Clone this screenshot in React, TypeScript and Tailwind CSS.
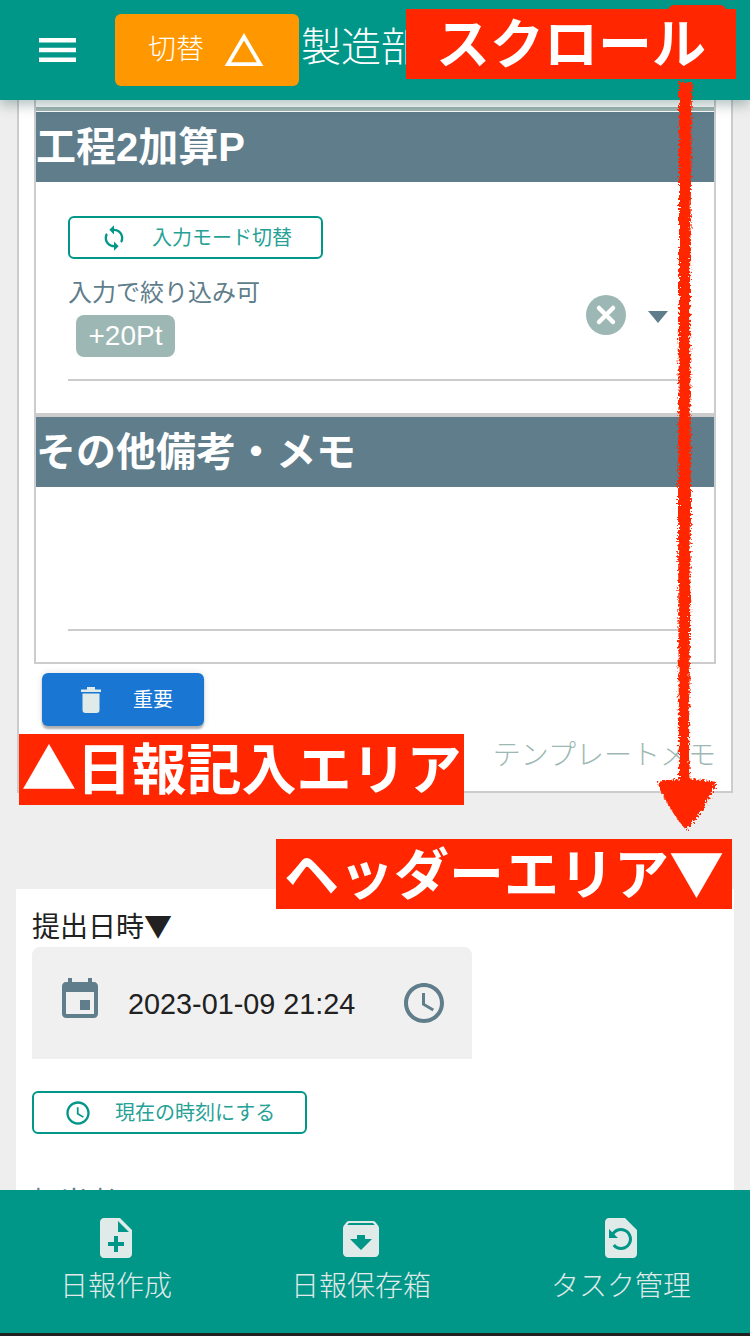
const jp = "font-['Liberation_Sans','Noto_Sans_CJK_JP',sans-serif]";
const cjkFirst = "font-['Noto_Sans_CJK_JP',sans-serif]";

function Section({ title }: { title: string }) {
  return (
    <div className="flex h-[70px] items-center bg-[#607d8b] text-[40px] font-bold leading-none text-white">
      {title}
    </div>
  );
}

function ClockIcon({ className }: { className: string }) {
  return (
    <svg viewBox="0 0 24 24" className={className} fill="currentColor">
      <path d="M11.99 2C6.47 2 2 6.48 2 12s4.47 10 9.99 10C17.52 22 22 17.52 22 12S17.52 2 11.99 2zM12 20c-4.42 0-8-3.58-8-8s3.58-8 8-8 8 3.58 8 8-3.58 8-8 8z" />
      <path d="M12.5 7H11v6l5.25 3.15.75-1.23-4.5-2.67z" />
    </svg>
  );
}

function NavItem({ icon, label, className }: { icon: React.ReactNode; label: string; className: string }) {
  return (
    <div className={`flex flex-col items-center ${className}`}>
      {icon}
      <span className="mt-[9px] text-[28px] font-light leading-[40px] text-[#e0eae8]">{label}</span>
    </div>
  );
}

function ScrollArrow() {
  return (
    <svg viewBox="0 0 90 760" className="absolute left-[645px] top-[76px] z-30 h-[760px] w-[90px]">
      <defs>
        <filter id="chalk" x="-30%" y="-5%" width="160%" height="110%">
          <feTurbulence type="fractalNoise" baseFrequency="0.45" numOctaves="2" seed="4" />
          <feDisplacementMap in="SourceGraphic" scale="7" />
        </filter>
      </defs>
      <g filter="url(#chalk)" fill="#ff2600">
        <path d="M34 6 L47 6 L45 210 L46 430 L44 680 L46 710 L34 710 L33 430 L34 210 Z" />
        <path d="M12 706 Q40 700 72 706 Q60 735 41 754 Q24 735 12 706 Z" />
      </g>
    </svg>
  );
}

export default function App() {
  return (
    <div className={`relative flex h-[1336px] w-[750px] flex-col overflow-hidden bg-[#eeeeee] ${jp}`}>
      {/* header */}
      <header className="relative z-10 flex h-[100px] shrink-0 items-start bg-[#009688] shadow-[0_5px_12px_rgba(0,60,50,0.3)]">
        <svg viewBox="0 0 37 24" className="ml-[39px] mt-[38px] h-6 w-[37px]" fill="white">
          <path d="M0 0h37v4.5H0zM0 9.8h37v4.5H0zM0 19.5h37V24H0z" />
        </svg>
        <button type="button" className="ml-[39px] mt-3.5 flex h-[72px] w-[184px] items-center rounded-md bg-[#ff9800] pl-[33px] text-[28px] font-light text-white">
          切替
          <svg viewBox="0 0 40 36" className="ml-[20px] h-[34px] w-[40px]" fill="none" stroke="white" strokeWidth="4">
            <path d="M20 4 L37 33 L3 33 Z" />
          </svg>
        </button>
        <span className="ml-0.5 mt-[23px] whitespace-nowrap text-[40px] font-light leading-[48px] text-white">製造部</span>
      </header>

      {/* scrolled content */}
      <main className="min-h-0 flex-1 overflow-hidden px-4">
        <div className="mx-px -mt-2 flex h-[701px] flex-col border-2 border-t-0 border-[#cccccc] bg-white px-[15px]">
          <div className="flex h-[572px] shrink-0 flex-col border-2 border-t-0 border-[#cccccc]">
            <div className="mb-px h-[19px] shrink-0 border-b-4 border-[#a3b7b4]" />
            <Section title="工程2加算P" />
            <div className="h-[231px] px-8 pt-[34px]">
              <button type="button" className="flex h-[43px] w-[255px] items-center rounded-md border-2 border-[#009688] pl-[30px] text-xl text-[#26a196]">
                <svg viewBox="0 0 24 24" className="h-7 w-7" fill="#009688">
                  <path d="M12 4V1L8 5l4 4V6c3.31 0 6 2.69 6 6 0 1.01-.25 1.97-.7 2.8l1.46 1.46C19.54 15.03 20 13.57 20 12c0-4.42-3.58-8-8-8zm0 14c-3.31 0-6-2.69-6-6 0-1.01.25-1.97.7-2.8L5.24 7.74C4.46 8.97 4 10.43 4 12c0 4.42 3.58 8 8 8v3l4-4-4-4v3z" />
                </svg>
                <span className="ml-[24px]">入力モード切替</span>
              </button>
              <div className="relative mt-[18px] h-[104px] border-b-2 border-[#cccccc]">
                <p className="text-2xl leading-8 text-[#607d8b]">入力で絞り込み可</p>
                <span className="ml-2 mt-1.5 flex h-[42px] w-[99px] items-center justify-center rounded-lg bg-[#9db8b4] text-[28px] font-light text-white">+20Pt</span>
                <svg viewBox="0 0 40 40" className="absolute right-[56px] top-[18px] h-10 w-10">
                  <circle cx="20" cy="20" r="20" fill="#9db8b4" />
                  <path d="M13 13 L27 27 M27 13 L13 27" stroke="white" strokeWidth="4.5" strokeLinecap="round" />
                </svg>
                <span className="absolute right-[14px] top-[34px] h-0 w-0 border-x-[10px] border-t-[12px] border-x-transparent border-t-[#607d8b]" />
              </div>
            </div>
            <div className="h-1 shrink-0 bg-[#cccccc]" />
            <Section title="その他備考・メモ" />
            <div className="h-[175px] px-8">
              <div className="h-[144px] border-b-2 border-[#cccccc]" />
            </div>
          </div>
          <button type="button" className="ml-[8px] mt-[9px] flex h-[53px] w-[162px] shrink-0 items-center rounded-md bg-[#1976d2] pl-[39px] text-xl text-white shadow-[0_3px_2px_rgba(0,0,0,0.28),0_0_7px_rgba(0,0,0,0.12)]">
            <svg viewBox="0 0 20 26" className="h-[26px] w-5" fill="#e0eae8">
              <path d="M0 2.5h20V5H0zM6 0h8v2.5H6zM1.5 6.5h17V23a3 3 0 0 1-3 3h-11a3 3 0 0 1-3-3z" />
            </svg>
            <span className="ml-8">重要</span>
          </button>
          <p className="mt-[10px] text-right text-[28px] font-light leading-[40px] text-[#9db8b4]">テンプレートメモ</p>
        </div>

        <div className="mt-24 h-[400px] bg-white px-4 pt-[17px]">
          <p className={`mb-[3px] text-[28px] leading-[38px] text-[#212121] ${cjkFirst}`}>提出日時▼</p>
          <div className="flex h-[112px] w-[440px] items-start rounded-t-lg bg-[#f0f0f0]">
            <svg viewBox="0 0 24 24" className="ml-[24px] mt-[29px] h-12 w-12" fill="#607d8b">
              <path d="M19 3h-1V1h-2v2H8V1H6v2H5c-1.11 0-2 .9-2 2v14c0 1.1.89 2 2 2h14c1.1 0 2-.9 2-2V5c0-1.1-.9-2-2-2zm0 16H5V8h14v11zM17 12h-5v5h5z" />
            </svg>
            <span className="ml-[24px] mt-[37px] text-[28.8px] leading-[40px] text-[#212121]">2023-01-09 21:24</span>
            <ClockIcon className="ml-[45px] mt-[32px] h-12 w-12 text-[#607d8b]" />
          </div>
          <button type="button" className="mt-8 flex h-[43px] w-[275px] items-center rounded-md border-2 border-[#009688] pl-[30px] text-xl text-[#26a196]">
            <ClockIcon className="h-7 w-7 text-[#009688]" />
            <span className="ml-[23px]">現在の時刻にする</span>
          </button>
          <p className="mt-[53px] text-[28px] leading-8 text-[#607d8b]">担当者</p>
        </div>
      </main>

      {/* bottom nav */}
      <nav className="relative z-10 flex h-[143px] shrink-0 items-start bg-[#009688] pt-7">
        <NavItem
          className="ml-[60px]"
          label="日報作成"
          icon={
            <svg viewBox="4 2 16 20" className="h-10 w-8" fill="#e0eae8">
              <path d="M14 2H6c-1.1 0-1.99.9-1.99 2L4 20c0 1.1.89 2 1.99 2H18c1.1 0 2-.9 2-2V8l-6-6zm2 14h-3v3h-2v-3H8v-2h3v-3h2v3h3v2zm-3-7V3.5L18.5 9H13z" />
            </svg>
          }
        />
        <NavItem
          className="ml-[119px]"
          label="日報保存箱"
          icon={
            <svg viewBox="3 3 18 18" className="mt-0.5 h-[38px] w-9" fill="#e0eae8">
              <path d="M20.54 5.23l-1.39-1.68C18.88 3.21 18.47 3 18 3H6c-.47 0-.88.21-1.16.55L3.46 5.23C3.17 5.57 3 6.02 3 6.5V19c0 1.1.9 2 2 2h14c1.1 0 2-.9 2-2V6.5c0-.48-.17-.93-.46-1.27zM12 17.5L6.5 12H10v-2h4v2h3.5L12 17.5zM5.12 5l.81-1h12l.94 1H5.12z" />
            </svg>
          }
        />
        <NavItem
          className="ml-[120px]"
          label="タスク管理"
          icon={
            <svg viewBox="4 2 16 20" className="h-10 w-8" fill="#e0eae8" fillRule="evenodd">
              <path d="M14 2H6c-1.1 0-1.99.9-1.99 2L4 20c0 1.1.89 2 1.99 2H18c1.1 0 2-.9 2-2V8l-6-6zM12 18c-1.7 0-3.2-.8-4.2-2l1.2-1c.7.9 1.8 1.5 3 1.5 2.2 0 4-1.800 4-4s-1.800-4-4-4c-1.400 0-2.600.7-3.300 1.800L10.500 12h-4.500V7.500l1.600 1.600C8.600 7.800 10.200 7 12 7c3 0 5.500 2.500 5.500 5.500S15 18 12 18z" />
            </svg>
          }
        />
      </nav>
      <div className="h-[3px] shrink-0 bg-[#212121]" />

      {/* annotations laid over the screenshot */}
      <span className="absolute left-[668px] top-[5px] z-20 h-[10px] w-[58px] rounded-t-md bg-[#ff2600]" />
      <span className={`absolute left-[406px] top-[9px] z-20 flex h-[70px] w-[330px] items-center justify-center bg-[#ff2600] pb-2 text-[54px] font-bold text-white ${cjkFirst}`}>スクロール</span>
      <span className={`absolute left-[19px] top-[734px] z-20 flex h-[71px] w-[445px] items-center justify-center whitespace-nowrap bg-[#ff2600] pb-2 text-[55px] font-bold leading-none text-white ${cjkFirst}`}>▲日報記入エリア</span>
      <span className={`absolute left-[276px] top-[839px] z-20 flex h-[70px] w-[456px] items-center justify-center whitespace-nowrap bg-[#ff2600] pb-2 text-[55px] font-bold leading-none text-white ${cjkFirst}`}>ヘッダーエリア▼</span>
      <ScrollArrow />
    </div>
  );
}
